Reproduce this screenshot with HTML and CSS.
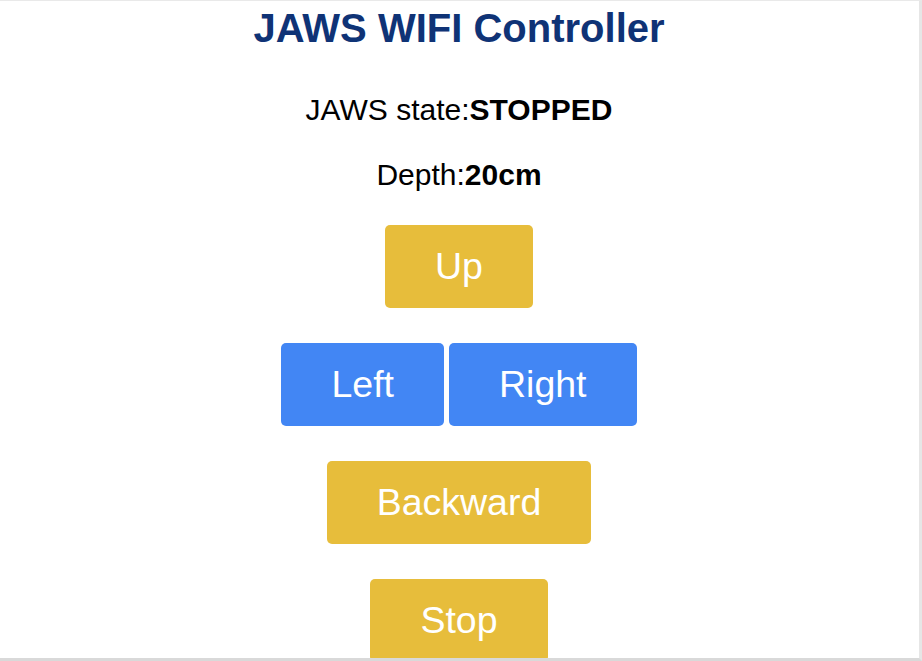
FILE: index.html
```html
<!DOCTYPE html>
<html>
<head>
<meta charset="utf-8">
<title>JAWS WIFI Controller</title>
<link rel="stylesheet" href="styles.css">
</head>
<body>
<div class="page">
  <h1 class="title">JAWS WIFI Controller</h1>
  <p class="info">JAWS state:<strong>STOPPED</strong></p>
  <p class="info info-depth">Depth:<strong>20cm</strong></p>
  <div class="controls">
    <div class="row"><button class="button">Up</button></div>
    <div class="row"><button class="button button2 btn-left">Left</button><button class="button button2">Right</button></div>
    <div class="row"><button class="button">Backward</button></div>
    <div class="row"><button class="button">Stop</button></div>
  </div>
</div>
<div class="frame"></div>
</body>
</html>
```
FILE: styles.css
```css
html, body {
  margin: 0;
  padding: 0;
  background: #ffffff;
  overflow: hidden;
}

body {
  font-family: "Liberation Sans", Arial, Helvetica, sans-serif;
  height: 661px;
}

.page {
  width: 918px;
  text-align: center;
}

.title {
  margin: 5px 0 0;
  font-size: 40px;
  line-height: 46px;
  font-weight: bold;
  color: #0F3376;
}

.info {
  margin: 42px 0 0;
  font-size: 30px;
  line-height: 34px;
  color: #000000;
}

.info-depth {
  margin-top: 31px;
}

.controls {
  display: flex;
  flex-direction: column;
  align-items: center;
  gap: 35px;
  margin-top: 33px;
}

.row {
  display: flex;
  justify-content: center;
  gap: 5px;
}

.button {
  display: block;
  background-color: #e7bd3b;
  border: none;
  border-radius: 5px;
  color: #ffffff;
  padding: 20px 50px;
  font-family: "Liberation Sans", Arial, Helvetica, sans-serif;
  font-size: 37.5px;
  line-height: 43px;
  margin: 0;
  cursor: pointer;
}

.button2 {
  background-color: #4286f4;
}

.frame {
  position: fixed;
  left: 0;
  top: 0;
  width: 919px;
  height: 657px;
  border-top: 1px solid #e9e9e9;
  border-right: 3px solid #e6e6e6;
  border-bottom: 3px solid #d9d9d9;
  pointer-events: none;
}
```
